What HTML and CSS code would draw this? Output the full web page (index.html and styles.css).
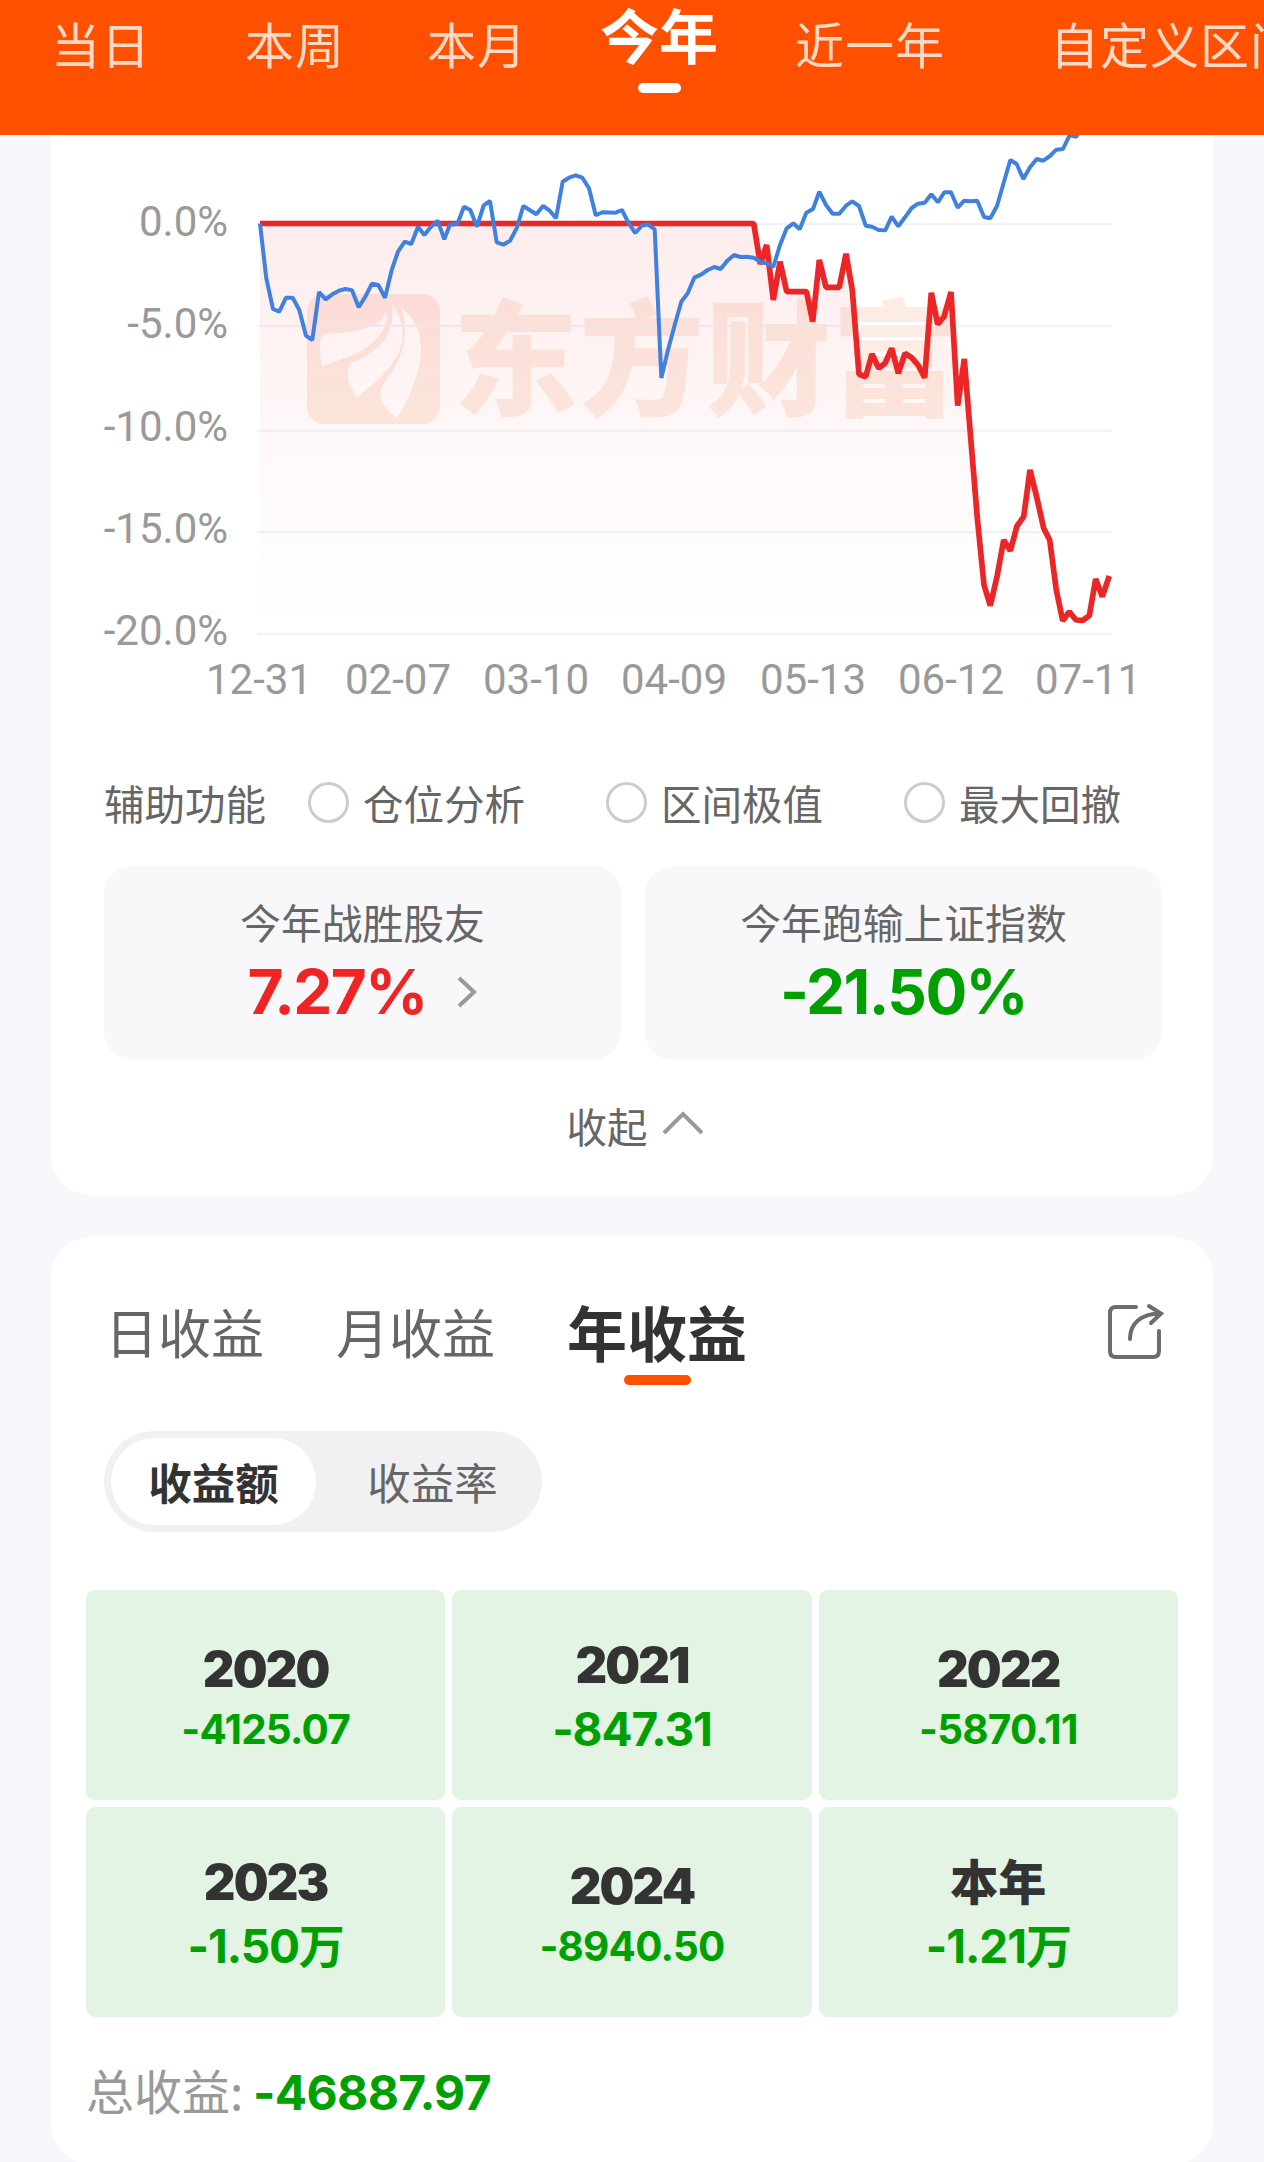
FILE: index.html
```html
<!DOCTYPE html>
<html lang="zh-CN">
<head>
    <meta charset="UTF-8">
    <meta name="viewport" content="width=device-width, initial-scale=1.0">
    <title>收益分析</title>
    <link rel="stylesheet" href="styles.css">
</head>
<body>
    <nav class="period-tabs">
        <span class="period">当日</span>
        <span class="period">本周</span>
        <span class="period">本月</span>
        <span class="period active">今年</span>
        <span class="period">近一年</span>
        <span class="period">自定义区间</span>
    </nav>

    <section class="card trend-card">
        <!-- 收益走势图 -->
        <svg class="chart" viewBox="51 135 1162 590" width="1162" height="590">
            <defs>
                <linearGradient id="areaFill" gradientUnits="userSpaceOnUse" x1="0" y1="223" x2="0" y2="634">
                    <stop offset="0" stop-color="#ee2222" stop-opacity="0.085"/>
                    <stop offset="0.5" stop-color="#ee2222" stop-opacity="0.035"/>
                    <stop offset="1" stop-color="#ee2222" stop-opacity="0"/>
                </linearGradient>
                <linearGradient id="logoFill" x1="0" y1="0" x2="0" y2="1">
                    <stop offset="0" stop-color="#fce9e4"/>
                    <stop offset="1" stop-color="#fcecdf"/>
                </linearGradient>
            </defs>
            <g class="watermark">
                <rect x="307" y="294" width="133" height="130" rx="17" fill="url(#logoFill)"/>
                <path class="feather" d="M386 309C384 325 364 332 325 334C317 339 320 354 322 366C352 357 392 342 386 309Z"/>
                <path class="feather" d="M392 304C396 340 375 352 352 363C343 372 350 386 357 397C388 374 420 344 392 304Z"/>
                <path class="feather" d="M401 307C412 340 398 366 382 386C376 400 388 412 397 418C424 374 432 331 401 307Z"/>
                <text x="453" y="406" textLength="504">东方财富</text>
            </g>
            <g class="grid-lines">
                <path d="M257 224.3H1112M257 325.7H1112M257 430.7H1112M257 532.3H1112M257 634.3H1112"/>
            </g>
            <path fill="url(#areaFill)" d="M260 223.5H753.7L760.3 264L766.7 245L773.3 300L780 261.7L786.7 291.7H806.5L812.7 321.7L819.3 260L826 287.3H839.3L846 253.7L852.3 290L859 374.3L865.7 376.7L872 354L878.7 368.3L885 363.3L891.7 348.3L898.3 373.3L905 353.3L911.7 357.7L918 365L924.7 377.7L931.3 292.7L937.7 324.3L944 316.7L951 292L957.7 405.7L964.3 359L970.7 438L977.5 520L984 585L990.3 605.7L997 576.7L1003.7 540L1010.3 550.7L1017 526L1023.7 516.7L1030 470L1037 498.3L1043.7 528.3L1049.7 540L1056.3 590L1062.7 620.7L1069.3 611.7L1076 620L1082.7 620.3L1089.3 615.7L1095.7 579L1102.3 596.7L1109.3 576V634H260Z"/>
            <polyline class="line-mine" points="260,223.5 753.7,223.5 760.3,264 766.7,245 773.3,300 780,261.7 786.7,291.7 806.5,291.7 812.7,321.7 819.3,260 826,287.3 839.3,287.3 846,253.7 852.3,290 859,374.3 865.7,376.7 872,354 878.7,368.3 885,363.3 891.7,348.3 898.3,373.3 905,353.3 911.7,357.7 918,365 924.7,377.7 931.3,292.7 937.7,324.3 944,316.7 951,292 957.7,405.7 964.3,359 970.7,438 977.5,520 984,585 990.3,605.7 997,576.7 1003.7,540 1010.3,550.7 1017,526 1023.7,516.7 1030,470 1037,498.3 1043.7,528.3 1049.7,540 1056.3,590 1062.7,620.7 1069.3,611.7 1076,620 1082.7,620.3 1089.3,615.7 1095.7,579 1102.3,596.7 1109.3,576"/>
            <polyline class="line-index" points="260,223.5 266.3,278.3 273,309 279.3,311.7 286,297.7 292.7,297.7 299.3,310 306,335.7 312.3,340 319,292 325.7,299.3 332.3,294.3 339,290.7 345.3,289 352,290.3 358.7,307.3 365.3,296.7 372,283.7 378.3,285 385,297.7 391.7,270 398,251.7 404.7,241.7 411.3,244 418,226.7 424.3,235 431,226.7 437.7,220.7 444.3,239.3 450,224.5 457.3,224 464,206.7 470.3,210 477,226.7 483.7,205.3 490,201 496.7,242.3 503.3,244.7 510,240.7 516.7,228.3 523.3,206 530,210.3 536.3,214.3 543,206 549.7,210.7 556,218.3 562.7,181.7 569,177.7 575.7,175.3 582.3,177.7 589,188.3 595.7,215.3 602.3,212.3 615.7,212.7 622,210 628.7,223.3 635.3,233 641.7,225.7 648,224.3 654.7,229.3 661.3,378 668,350 674.7,325 681.3,301.7 687.7,293.3 694.3,277.7 701,274.7 707.7,270 714.3,267 720.7,269 727.3,260.7 734,255 740.3,257 747,256.7 753.7,257.7 760.3,261.7 766.7,263.3 773.3,267 780,245 786.7,228.3 793.3,223.3 799.7,229.3 806.3,212.7 813,209 819.3,191.7 826,205 832.7,213.7 839.3,213.7 846,205.7 852.3,201.3 859,206 865.7,225.7 872,226.7 878.7,230 885.3,230.3 891.7,216.7 898.3,226.3 905,217.3 911.7,208 918,203.7 924.7,202.7 931.3,194.3 938,202.3 944.3,192.3 951,192.3 957.7,207.7 964.3,200.7 970.7,201.3 977.3,200.7 984,217 990.3,218.3 997,206 1003.7,182.7 1010.3,160 1016.7,164 1023.3,179 1030,167.3 1036.7,159 1043.3,160.7 1050,156 1056.3,149.7 1063,149 1069.7,135 1076.3,136.7 1083,125"/>
            <g class="axis axis-y">
                <text x="228" y="236">0.0%</text>
                <text x="228" y="338">-5.0%</text>
                <text x="228" y="441">-10.0%</text>
                <text x="228" y="543">-15.0%</text>
                <text x="228" y="645">-20.0%</text>
            </g>
            <g class="axis axis-x">
                <text x="259" y="694">12-31</text>
                <text x="398" y="694">02-07</text>
                <text x="536" y="694">03-10</text>
                <text x="674" y="694">04-09</text>
                <text x="813" y="694">05-13</text>
                <text x="951" y="694">06-12</text>
                <text x="1088" y="694">07-11</text>
            </g>
        </svg>

        <div class="options">
            <span class="options-title">辅助功能</span>
            <label class="option"><i class="radio"></i>仓位分析</label>
            <label class="option"><i class="radio"></i>区间极值</label>
            <label class="option"><i class="radio"></i>最大回撤</label>
        </div>

        <div class="summary">
            <div class="summary-box">
                <div class="summary-label">今年战胜股友</div>
                <div class="summary-value up">7.27%
                    <svg class="arrow" width="22" height="32" viewBox="0 0 22 32"><path d="M3 2L18 16L3 30"/></svg>
                </div>
            </div>
            <div class="summary-box">
                <div class="summary-label">今年跑输上证指数</div>
                <div class="summary-value down">-21.50%</div>
            </div>
        </div>

        <div class="collapse">收起
            <svg class="arrow" width="42" height="28" viewBox="0 0 42 28"><path d="M2 22L21 3L40 22"/></svg>
        </div>
    </section>

    <section class="card profit-card">
        <div class="profit-tabs">
            <span class="profit-tab">日收益</span>
            <span class="profit-tab">月收益</span>
            <span class="profit-tab active">年收益</span>
            <svg class="share" width="60" height="60" viewBox="0 0 60 60">
                <path d="M31 5H11Q5 5 5 11V49Q5 55 11 55H48Q54 55 54 49V29"/>
                <path d="M25 37C25 21 36 12 55 11.5M44 4L56 11.5L46 21"/>
            </svg>
        </div>

        <div class="switch">
            <span class="switch-item on">收益额</span>
            <span class="switch-item">收益率</span>
        </div>

        <div class="years">
            <div class="year small"><b>2020</b><em>-4125.07</em></div>
            <div class="year"><b>2021</b><em>-847.31</em></div>
            <div class="year small"><b>2022</b><em>-5870.11</em></div>
            <div class="year"><b>2023</b><em>-1.50万</em></div>
            <div class="year small"><b>2024</b><em>-8940.50</em></div>
            <div class="year"><b class="current">本年</b><em>-1.21万</em></div>
        </div>

        <div class="total">总收益: <strong>-46887.97</strong></div>
    </section>
</body>
</html>
```
FILE: styles.css
```css
* {
    box-sizing: border-box;
}
body {
    margin: 0;
    width: 1264px;
    height: 2162px;
    overflow: hidden;
    background-color: #f6f8fb;
    color: #666;
    font-family: "Noto Sans CJK SC", sans-serif;
}
.period-tabs {
    display: flex;
    height: 135px;
    padding-left: 51px;
    background-color: #ff5000;
    white-space: nowrap;
    overflow: hidden;
}
.period {
    flex: none;
    height: 95px;
    margin-right: 82px;
    font-size: 49px;
    line-height: 86px;
    letter-spacing: 1px;
    color: #ffd9c6;
}
.period:nth-child(1) {
    margin-right: 94px;
}
.period:nth-child(3) {
    margin-right: 73px;
}
.period:nth-child(5) {
    margin-right: 105px;
}
.period.active {
    display: flex;
    flex-direction: column;
    align-items: center;
    margin-right: 77px;
    font-size: 59px;
    font-weight: bold;
    line-height: 68px;
    letter-spacing: 0;
    color: #fff;
}
.period.active::after {
    content: "";
    width: 43px;
    height: 10px;
    margin-top: 15px;
    border-radius: 5px;
    background-color: #fff;
}
.card {
    width: 1162px;
    margin: 0 auto;
    background-color: #fff;
    border-radius: 40px;
}
.trend-card {
    height: 1060px;
    border-top-left-radius: 0;
    border-top-right-radius: 0;
}
.chart {
    display: block;
}
.watermark text {
    font-family: "Noto Sans CJK SC", sans-serif;
    font-size: 125px;
    font-weight: 900;
    fill: #fcece3;
}
.feather {
    fill: #fff;
}
.grid-lines path {
    stroke: #eef1f5;
    stroke-width: 2;
}
.line-mine {
    fill: none;
    stroke: #ec2626;
    stroke-width: 5.7;
    stroke-linejoin: bevel;
}
.line-index {
    fill: none;
    stroke: #4080df;
    stroke-width: 4;
    stroke-linejoin: bevel;
}
.axis text {
    font-family: Roboto, sans-serif;
    font-size: 42px;
    fill: #999;
}
.axis-y text {
    text-anchor: end;
}
.axis-x text {
    text-anchor: middle;
}
.options {
    display: flex;
    align-items: center;
    height: 80px;
    margin-top: 37px;
    padding-left: 53px;
    font-size: 40.5px;
}
.options-title {
    width: 204px;
}
.option {
    display: flex;
    align-items: center;
    width: 298px;
    white-space: nowrap;
}
.radio {
    width: 41px;
    height: 41px;
    margin-right: 14px;
    border: 3px solid #ccc;
    border-radius: 50%;
}
.summary {
    display: flex;
    gap: 24px;
    margin: 24px 51px 0 53px;
}
.summary-box {
    flex: 1;
    height: 194px;
    padding-top: 26px;
    border-radius: 28px;
    background-color: #f8f8fb;
    text-align: center;
}
.summary-label {
    font-size: 40.8px;
    line-height: 60px;
}
.summary-value {
    display: flex;
    justify-content: center;
    align-items: center;
    height: 79px;
    font-family: Inter, sans-serif;
    font-size: 62px;
    font-weight: bold;
    letter-spacing: -1.6px;
}
.up {
    color: #f02424;
}
.down {
    color: #00a000;
}
.arrow path {
    fill: none;
    stroke: #999;
    stroke-width: 4;
}
.up .arrow {
    margin-left: 29px;
}
.collapse {
    display: flex;
    justify-content: center;
    align-items: center;
    gap: 14px;
    height: 60px;
    margin-top: 35px;
    padding-left: 6px;
    font-size: 40.5px;
}
.profit-card {
    height: 927px;
    margin-top: 42px;
    padding-top: 52px;
}
.profit-tabs {
    display: flex;
    height: 110px;
    padding: 0 48px 0 54px;
}
.profit-tab {
    margin-right: 72px;
    font-size: 53px;
    line-height: 84px;
}
.profit-tab.active {
    display: flex;
    flex-direction: column;
    align-items: center;
    font-size: 60px;
    font-weight: bold;
    color: #333;
}
.profit-tab.active::after {
    content: "";
    width: 67px;
    height: 10px;
    margin-top: 2px;
    border-radius: 5px;
    background-color: #ff5000;
}
.share {
    margin: 13px 0 0 auto;
    fill: none;
    stroke: #6c6c6c;
    stroke-width: 4;
    stroke-linecap: round;
}
.switch {
    display: flex;
    width: 438px;
    height: 101px;
    margin: 32px 0 0 53px;
    padding: 7px;
    border-radius: 51px;
    background-color: #f1f1f4;
}
.switch-item {
    flex: none;
    width: 205px;
    height: 87px;
    margin-right: 14px;
    border-radius: 44px;
    font-size: 43.5px;
    line-height: 87px;
    text-align: center;
}
.switch-item.on {
    background-color: #fff;
    color: #333;
    font-weight: bold;
}
.years {
    display: grid;
    grid-template-columns: repeat(3, 1fr);
    gap: 7px;
    margin: 58px 35px 0;
}
.year {
    display: flex;
    flex-direction: column;
    align-items: center;
    height: 210px;
    padding-top: 49px;
    border-radius: 9px;
    background-color: #e3f4e4;
    font-family: Inter, "Noto Sans CJK SC", sans-serif;
    font-weight: bold;
}
.year b {
    height: 60px;
    font-size: 49px;
    line-height: 54px;
    letter-spacing: -1.8px;
    color: #333;
}
.year b.current {
    font-size: 48px;
    letter-spacing: 0;
}
.year em {
    font-size: 46px;
    font-style: normal;
    line-height: 60px;
    letter-spacing: -1.1px;
    color: #00a000;
}
.year.small {
    padding-top: 53px;
}
.year.small em {
    font-size: 40.5px;
    line-height: 54px;
    letter-spacing: -0.8px;
}
.total {
    margin: 37px 0 0 35px;
    font-size: 48px;
    line-height: 70px;
    color: #999;
}
.total strong {
    margin-left: -1px;
    font-family: Inter, sans-serif;
    letter-spacing: -0.7px;
    color: #00a000;
}
```
